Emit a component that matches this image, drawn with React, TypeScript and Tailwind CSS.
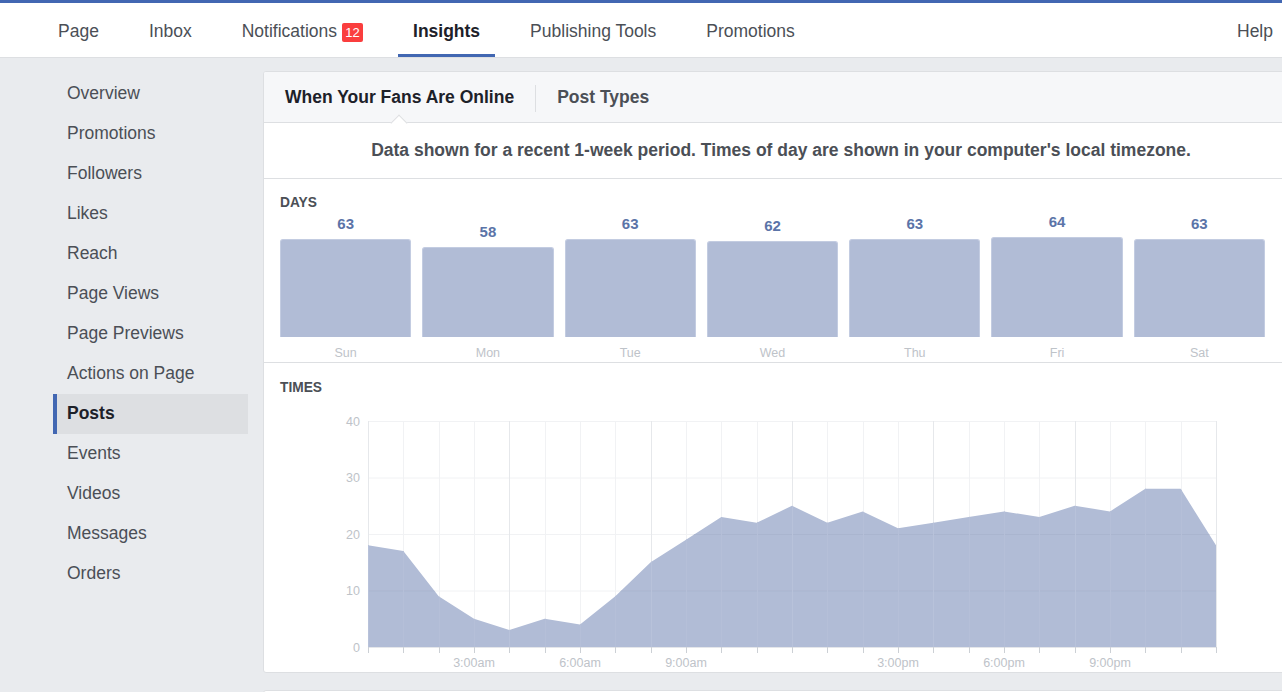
import React from "react";

const FONT = { fontFamily: '"Liberation Sans", Arial, sans-serif' };

const navItems = ["Page", "Inbox", "Notifications", "Insights", "Publishing Tools", "Promotions"];
const sideItems = [
  "Overview", "Promotions", "Followers", "Likes", "Reach", "Page Views", "Page Previews",
  "Actions on Page", "Posts", "Events", "Videos", "Messages", "Orders",
];
const days = [
  { d: "Sun", v: 63 }, { d: "Mon", v: 58 }, { d: "Tue", v: 63 }, { d: "Wed", v: 62 },
  { d: "Thu", v: 63 }, { d: "Fri", v: 64 }, { d: "Sat", v: 63 },
];
const hours = [18, 17, 9, 5, 3, 5, 4, 9, 15, 19, 23, 22, 25, 22, 24, 21, 22, 23, 24, 23, 25, 24, 28, 28, 18];

function TimesChart() {
  const x0 = 88;
  const step = 848 / 24;
  const yTop = 16;
  const yBot = 242;
  const sc = (yBot - yTop) / 40;
  const X = (i: number) => x0 + i * step;
  const Y = (v: number) => yBot - v * sc;
  const pts = hours.map((v, i) => `${X(i).toFixed(2)},${Y(v).toFixed(2)}`).join(" ");
  const area = `${X(0)},${yBot} ${pts} ${X(24)},${yBot}`;
  const xl: [number, string][] = [[3, "3:00am"], [6, "6:00am"], [9, "9:00am"], [15, "3:00pm"], [18, "6:00pm"], [21, "9:00pm"]];
  return (
    <svg width={985} height={266} className="block" style={FONT}>
      <defs>
        <clipPath id="areaClip">
          <polygon points={area} />
        </clipPath>
      </defs>
      {[0, 10, 20, 30, 40].map((v) => (
        <text key={v} x={80} y={Y(v) + 4.5} textAnchor="end" fontSize={12.5} fill="#bec3c9">{v}</text>
      ))}
      {[10, 20, 30, 40].map((v) => (
        <line key={v} x1={x0} x2={X(24)} y1={Y(v) + 0.5} y2={Y(v) + 0.5} stroke="#f1f2f4" strokeWidth={1} />
      ))}
      {hours.map((_, i) => (
        <line key={i} x1={Math.round(X(i)) + 0.5} x2={Math.round(X(i)) + 0.5} y1={yTop} y2={yBot}
          stroke={i % 4 === 0 ? "#e6e8eb" : "#f1f2f4"} strokeWidth={1} />
      ))}
      <polygon points={area} fill="#b1bcd6" />
      <g clipPath="url(#areaClip)">
        {[10, 20, 30].map((v) => (
          <line key={v} x1={x0} x2={X(24)} y1={Y(v) + 0.5} y2={Y(v) + 0.5} stroke="#aab5cf" strokeWidth={1} />
        ))}
        {hours.map((_, i) => (
          <line key={i} x1={Math.round(X(i)) + 0.5} x2={Math.round(X(i)) + 0.5} y1={yTop} y2={yBot}
            stroke={i % 4 === 0 ? "#b8c2da" : "#b5bfd8"} strokeWidth={1} />
        ))}
      </g>
      <line x1={x0} x2={X(24)} y1={yBot + 0.5} y2={yBot + 0.5} stroke="#e4e6ea" strokeWidth={1} />
      {hours.map((_, i) => (
        <line key={i} x1={Math.round(X(i)) + 0.5} x2={Math.round(X(i)) + 0.5} y1={yBot} y2={yBot + 6}
          stroke="#ccd0d5" strokeWidth={1} />
      ))}
      {xl.map(([i, t]) => (
        <text key={t} x={X(i)} y={yBot + 19.5} textAnchor="middle" fontSize={12.5} fill="#bec3c9">{t}</text>
      ))}
    </svg>
  );
}

export default function App() {
  return (
    <div className="w-[1282px] h-[692px] overflow-hidden bg-[#e9ebee]" style={FONT}>
      {/* top nav */}
      <div className="h-[3px] bg-[#4267b2]" />
      <div className="h-[55px] bg-white border-b border-[#dddfe2] flex items-stretch pl-[33px] pr-[9px]">
        {navItems.map((n) => {
          const active = n === "Insights";
          return (
            <div key={n} className="mx-[10px] flex items-stretch">
              <div
                className={`px-[15px] flex items-center border-b-[3px] pt-[7px] ${active ? "border-[#4267b2]" : "border-transparent"}`}
              >
                <span className={`text-[17.5px] leading-none ${active ? "font-bold text-[#1d2129]" : "text-[#4b4f56]"}`}>{n}</span>
                {n === "Notifications" && (
                  <span className="ml-[5px] w-[21px] h-[19px] rounded-[2px] bg-[#fa3e3e] text-white text-[13px] leading-[19px] text-center">12</span>
                )}
              </div>
            </div>
          );
        })}
        <div className="ml-auto flex items-center pt-[4px]">
          <span className="text-[17.5px] leading-none text-[#4b4f56]">Help</span>
        </div>
      </div>

      {/* body */}
      <div className="flex pl-[53px]">
        {/* sidebar */}
        <div className="w-[195px] shrink-0 pt-[16px] flex flex-col">
          {sideItems.map((s) => {
            const active = s === "Posts";
            return (
              <div
                key={s}
                className={`h-[40px] flex items-center pl-[10px] border-l-4 ${active ? "border-[#4267b2] bg-[#dddfe2]" : "border-transparent"}`}
              >
                <span className={`text-[17.5px] leading-none ${active ? "font-bold text-[#1d2129]" : "text-[#4b4f56]"}`}>{s}</span>
              </div>
            );
          })}
        </div>

        {/* main */}
        <div className="ml-[15px] shrink-0 pt-[13px] flex flex-col">
          <div className="w-[1036px] bg-white border border-[#dddfe2] rounded-[3px] overflow-hidden">
            {/* header tabs */}
            <div className="relative h-[51px] bg-[#f6f7f9] border-b border-[#dddfe2] flex items-center pl-[21px] pt-[2px]">
              <span className="text-[17.5px] font-bold text-[#1d2129] leading-none">When Your Fans Are Online</span>
              <div className="mx-[21px] w-px h-[27px] bg-[#dddfe2]" />
              <span className="text-[17.5px] font-bold text-[#4b4f56] leading-none">Post Types</span>
              <div className="absolute left-[129px] bottom-[-7px] w-[12px] h-[12px] bg-white border-l border-t border-[#dddfe2] rotate-45" />
            </div>
            {/* description */}
            <div className="h-[56px] border-b border-[#dddfe2] flex items-center justify-center">
              <span className="text-[17.5px] font-bold text-[#4b4f56] leading-none">
                Data shown for a recent 1-week period. Times of day are shown in your computer's local timezone.
              </span>
            </div>
            {/* days */}
            <div className="h-[184px] border-b border-[#dddfe2] pl-[16px] pt-[17px]">
              <div className="text-[13.75px] font-bold text-[#4b4f56] leading-[14px] h-[14px]">DAYS</div>
              <div className="w-[985px] h-[127px] grid grid-cols-7 gap-[11px] items-end">
                {days.map((d) => (
                  <div key={d.d} className="flex flex-col items-stretch">
                    <div className="text-center text-[15px] font-bold text-[#5b74a8] leading-[18px] mb-[6px]">{d.v}</div>
                    <div
                      className="bg-[#b1bcd6] rounded-t-[3px] border border-b-0 border-[#c3cce1]"
                      style={{ height: `${Math.round(d.v * 1.556)}px` }}
                    />
                  </div>
                ))}
              </div>
              <div className="w-[985px] grid grid-cols-7 gap-[11px] mt-[9px]">
                {days.map((d) => (
                  <div key={d.d} className="text-center text-[12.5px] text-[#bec3c9] leading-[14px]">{d.d}</div>
                ))}
              </div>
            </div>
            {/* times */}
            <div className="h-[309px] pl-[16px] pt-[18px]">
              <div className="text-[13.75px] font-bold text-[#4b4f56] leading-[14px] h-[14px]">TIMES</div>
              <div className="mt-[10px]">
                <TimesChart />
              </div>
            </div>
          </div>
          <div className="mt-[17px] w-[1036px] h-[60px] bg-white border border-[#dddfe2] rounded-[3px]" />
        </div>
      </div>
    </div>
  );
}
